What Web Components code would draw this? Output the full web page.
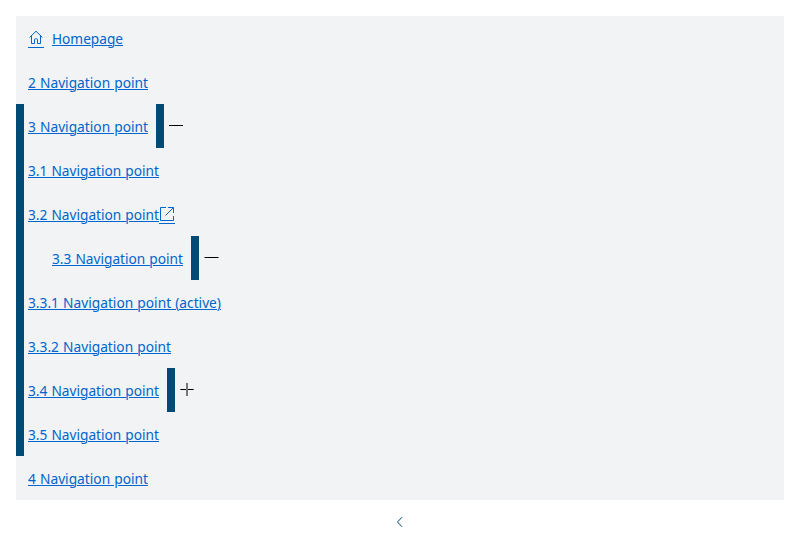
<!DOCTYPE html>
<html lang="en">
<head>
<meta charset="utf-8">
<title>Navigation</title>
<style>
body { margin: 0; padding: 16px; background: #fff; font: 15px/20px "Noto Sans", "Open Sans", sans-serif; }
</style>
</head>
<body>
<nav-tree>
  <nav-item label="Homepage" width="71" icon="home"></nav-item>
  <nav-item label="2 Navigation point" width="120"></nav-item>
  <nav-branch>
    <nav-item label="3 Navigation point" width="120" toggle="minus"></nav-item>
    <nav-item label="3.1 Navigation point" width="131"></nav-item>
    <nav-item label="3.2 Navigation point" width="131" icon="external"></nav-item>
    <nav-item label="3.3 Navigation point" width="131" toggle="minus" indent></nav-item>
    <nav-item label="3.3.1 Navigation point (active)" width="193"></nav-item>
    <nav-item label="3.3.2 Navigation point" width="143"></nav-item>
    <nav-item label="3.4 Navigation point" width="131" toggle="plus"></nav-item>
    <nav-item label="3.5 Navigation point" width="131"></nav-item>
  </nav-branch>
  <nav-item label="4 Navigation point" width="120"></nav-item>
</nav-tree>
<nav-collapse></nav-collapse>
<script>
class NavTree extends HTMLElement {
  constructor() {
    super();
    this.attachShadow({ mode: "open" }).innerHTML = `
      <style>:host { display: flex; flex-direction: column; background: #f1f3f5; }</style>
      <slot></slot>`;
  }
}
class NavBranch extends HTMLElement {
  constructor() {
    super();
    this.attachShadow({ mode: "open" }).innerHTML = `
      <style>:host { display: block; background: linear-gradient(#004b76, #004b76) left / 8px 100% no-repeat; }</style>
      <slot></slot>`;
  }
}
const icons = {
  home: `<svg width="16" height="16" viewBox="0 0 16 16"><path d="M1.6 7.5 8 1.2l6.4 6.3M3.5 5.9v7.6h3V9.6q0-.8.8-.8h1.4q.8 0 .8.8v3.9h3V5.9"/></svg>`,
  external: `<svg width="16" height="16" viewBox="0 0 16 16"><path d="M7 1.5H1.5v13h13V10M9 1.5h5.5V7M14.2 1.8 6.5 9.5"/></svg>`,
  minus: `<svg width="16" height="16" viewBox="0 0 16 16"><path d="M1 7.5h14"/></svg>`,
  plus: `<svg width="16" height="16" viewBox="0 0 16 16"><path d="M1.3 7.5h13.4"/><path d="M8 1v13" stroke="#777" stroke-width="2"/></svg>`
};
class NavItem extends HTMLElement {
  constructor() { super(); this.attachShadow({ mode: "open" }); }
  connectedCallback() {
    const icon = this.getAttribute("icon"), toggle = this.getAttribute("toggle");
    const label = this.getAttribute("label");
    this.shadowRoot.innerHTML = `
      <style>
        :host { display: flex; height: 44px; padding-left: 12px; align-items: center; box-sizing: border-box; color: #0065cc; }
        :host([indent]) { padding-left: 36px; }
        :host([indent]) .toggle path { transform: translateX(.5px); }
        a { display: flex; align-items: flex-start; height: 20px; color: inherit; }
        .label { display: block; white-space: nowrap; }
        .text { display: inline-block; word-spacing: .6px; transform-origin: 0 0; text-decoration: underline; text-decoration-thickness: 1px; text-underline-offset: 1px; }
        .icon { width: 16px; height: 16px; padding-top: 3px; border-bottom: 1px solid currentColor; }
        .icon svg { margin-top: -1px; }
        .home { margin-right: 8px; }
        svg { display: block; fill: none; stroke: currentColor; }
        .toggle { display: flex; width: 28px; height: 44px; border: 0; border-left: 8px solid #004b76; margin: 0 0 0 8px; padding: 14px 0 0 4px; box-sizing: border-box; background: none; color: #000; }
      </style>
      <a>${icon === "home" ? `<span class="icon home">${icons.home}</span>` : ""}<span class="label"><span class="text">${label}</span></span>${icon === "external" ? `<span class="icon">${icons.external}</span>` : ""}</a>
      ${toggle ? `<button class="toggle" aria-label="Toggle">${icons[toggle]}</button>` : ""}`;
    const text = this.shadowRoot.querySelector(".text");
    const target = Number(this.getAttribute("width"));
    text.style.transform = `scaleX(${target / text.getBoundingClientRect().width})`;
    text.parentElement.style.width = target + "px";
  }
}
class NavCollapse extends HTMLElement {
  constructor() {
    super();
    this.attachShadow({ mode: "open" }).innerHTML = `
      <style>
        :host { display: flex; height: 44px; align-items: center; justify-content: center; color: #004b76; }
        svg { display: block; fill: none; stroke: currentColor; }
      </style>
      <svg width="16" height="16" viewBox="0 0 16 16"><path d="M10 3.2 5.5 8l4.5 4.8"/></svg>`;
  }
}
customElements.define("nav-tree", NavTree);
customElements.define("nav-branch", NavBranch);
customElements.define("nav-item", NavItem);
customElements.define("nav-collapse", NavCollapse);
</script>
</body>
</html>
